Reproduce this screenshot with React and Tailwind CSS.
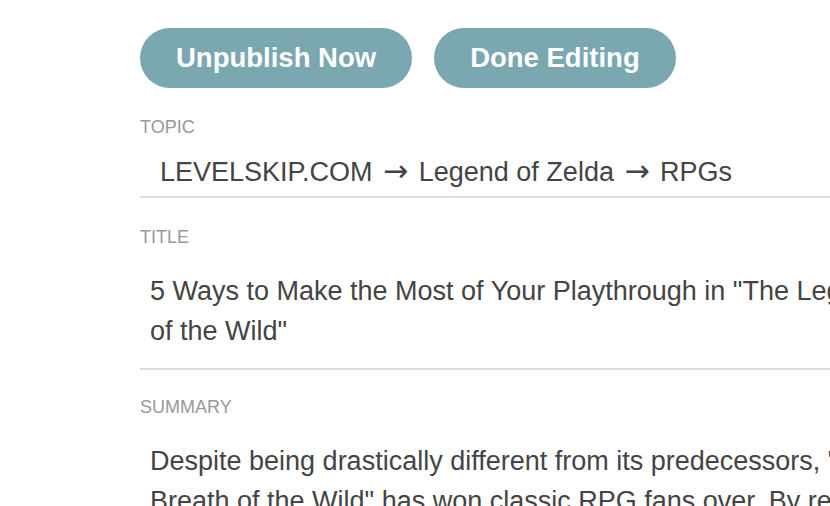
function Arrow() {
  return <span className="font-['DejaVu_Sans',sans-serif] text-[30px] mx-[3px]">→</span>;
}

export default function App() {
  return (
    <div className="w-full h-screen overflow-hidden bg-white font-['Liberation_Sans',Arial,sans-serif] text-[#444]">
      <div className="w-[982px] ml-[140px] pt-[28px]">
        <div className="flex gap-[22px]">
          <button className="h-[60px] px-[36px] rounded-full bg-[#7aa7b0] text-white font-bold text-[27.5px] leading-none">
            Unpublish Now
          </button>
          <button className="h-[60px] px-[36px] rounded-full bg-[#7aa7b0] text-white font-bold text-[27.5px] leading-none">
            Done Editing
          </button>
        </div>

        <div className="mt-[29px]">
          <div className="text-[18px] leading-[20px] text-[#999] uppercase">Topic</div>
          <div className="h-[61px] pt-[14px] pb-[5px] px-[20px] text-[27px] leading-[40px] border-b-2 border-[#ddd] whitespace-nowrap">
            LEVELSKIP.COM <Arrow /> Legend of Zelda <Arrow /> RPGs
          </div>
        </div>

        <div className="mt-[29px]">
          <div className="text-[18px] leading-[20px] text-[#999] uppercase">Title</div>
          <div className="pt-[24px] pb-[17px] px-[10px] text-[27px] leading-[40px] border-b-2 border-[#ddd]">
            5 Ways to Make the Most of Your Playthrough in "The Legend of Zelda: Breath of the Wild"
          </div>
        </div>

        <div className="mt-[27px]">
          <div className="text-[18px] leading-[20px] text-[#999] uppercase">Summary</div>
          <div className="pt-[24px] pb-[17px] px-[10px] text-[27px] leading-[40px]">
            Despite being drastically different from its predecessors, "The Legend of Zelda: Breath of the Wild" has won classic RPG fans over. By reworking the formula, it gives players a huge world to explore at their own pace.
          </div>
        </div>
      </div>
    </div>
  );
}
